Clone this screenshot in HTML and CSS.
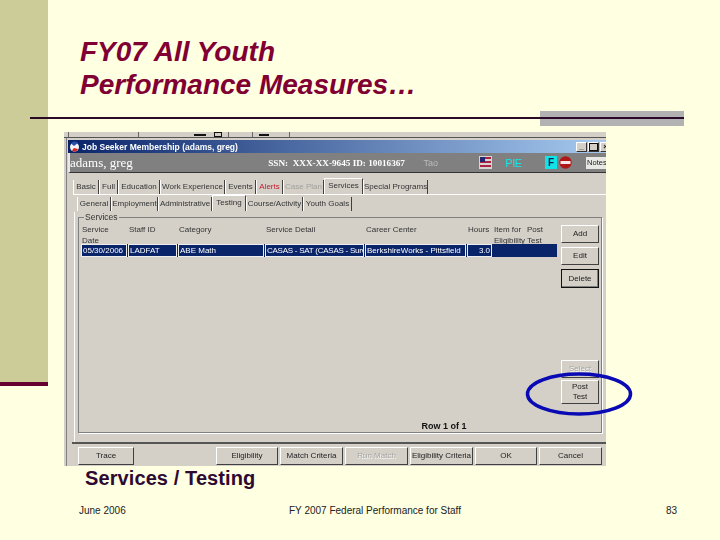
FILE: index.html
```html
<!DOCTYPE html>
<html lang="en">
<head>
<meta charset="utf-8">
<title>FY07 All Youth Performance Measures</title>
<link rel="stylesheet" href="styles.css">
</head>
<body>
<main class="slide">
  <div class="band"></div>
  <h1 class="title">FY07 All Youth<br>Performance Measures…</h1>
  <div class="rule"><div class="accent"></div><div class="line"></div></div>

  <section class="window">
    <div class="toolbar"><i class="s1"></i><i class="s2"></i><i class="s3"></i><i class="s4"></i><i class="s5"></i></div>
    <div class="titlebar">
      <svg class="appicon" width="12" height="12" viewBox="0 0 12 12"><rect width="12" height="12" fill="#0a246a"/><circle cx="6.5" cy="6" r="4.5" fill="#f4f4f4"/><path d="M3 2.5a4.5 4.5 0 0 1 7-0.5L6 5z" fill="#2a4fa8"/><path d="M4 9.5a3.5 3 0 0 0 6-1.5L6 7z" fill="#d8261c"/></svg>
      <span class="titletext">Job Seeker Membership (adams, greg)</span>
      <div class="winbtns"><b>_</b><b class="max"></b><b>×</b></div>
    </div>
    <div class="header">
      <span class="name">adams, greg</span>
      <span class="ssn">SSN: &nbsp;XXX-XX-9645 ID: 10016367</span>
      <span class="tao">Tao</span>
      <svg class="flag" width="13" height="13" viewBox="0 0 13 13"><rect width="13" height="13" fill="#d8d4d0"/><rect x="5" y="1" width="7" height="2" fill="#b02040"/><rect x="1" y="5" width="11" height="2" fill="#b02040"/><rect x="1" y="9" width="11" height="2" fill="#b02040"/><rect x="1" y="1" width="5" height="5" fill="#26266e"/></svg>
      <span class="pie">PIE</span>
      <span class="fbox">F</span>
      <svg class="stop" width="13" height="13" viewBox="0 0 13 13"><circle cx="6.5" cy="6.5" r="6.2" fill="#b01818"/><rect x="1.5" y="5" width="10" height="3" fill="#f4e8e8"/></svg>
      <span class="notes">Notes</span>
    </div>

    <div class="tabs primary">
      <span class="tab w26">Basic</span><span class="tab w19">Full</span><span class="tab w42">Education</span><span class="tab w65">Work Experience</span><span class="tab w31">Events</span><span class="tab w27 alert">Alerts</span><span class="tab w41 off">Case Plan</span><span class="tab w39 on">Services</span><span class="tab w65">Special Programs</span>
    </div>
    <div class="tabs secondary">
      <span class="tab w34">General</span><span class="tab w47">Employment</span><span class="tab w54">Administrative</span><span class="tab w34 on">Testing</span><span class="tab w57">Course/Activity</span><span class="tab w49">Youth Goals</span>
    </div>

    <div class="panel">
      <div class="group">
        <span class="legend">Services</span>
        <div class="list">
          <div class="cols heads">
            <span>Service<br>Date</span><span>Staff ID</span><span>Category</span><span>Service Detail</span><span>Career Center</span><span>Hours</span><span>Item for<br>Eligibility</span><span>Post<br>Test</span>
          </div>
          <div class="cols selected">
            <span>05/30/2006</span><span>LADFAT</span><span>ABE Math</span><span class="tight">CASAS - SAT (CASAS - Surv</span><span>BerkshireWorks - Pittsfield</span><span class="num">3.0</span><span></span><span></span>
          </div>
          <div class="count">Row 1 of 1</div>
        </div>
        <div class="actions">
          <button class="btn">Add</button>
          <button class="btn">Edit</button>
          <button class="btn focus">Delete</button>
          <button class="btn select off">Select</button>
          <button class="btn post">Post<br>Test</button>
        </div>
      </div>
    </div>

    <div class="footerbar">
      <button class="btn b56">Trace</button>
      <span class="blank"></span>
      <button class="btn b62">Eligibility</button>
      <button class="btn b63">Match Criteria</button>
      <button class="btn b63 off">Run Match</button>
      <button class="btn b63">Eligibility Criteria</button>
      <button class="btn b62">OK</button>
      <button class="btn b63">Cancel</button>
    </div>
  </section>

  <svg class="ring" width="110" height="48" viewBox="0 0 110 48"><ellipse cx="55" cy="24" rx="51.5" ry="20" fill="none" stroke="#0a0ab4" stroke-width="3.5"/></svg>

  <p class="caption">Services / Testing</p>
  <footer class="foot">
    <span class="date">June 2006</span>
    <span class="mid">FY 2007 Federal Performance for Staff</span>
    <span class="page">83</span>
  </footer>
</main>
</body>
</html>
```

FILE: styles.css
```css
* { box-sizing: border-box; }
html, body { margin: 0; padding: 0; }
body { background: #ffffe1; font-family: "Liberation Sans", Arial, sans-serif; }
.slide { position: relative; width: 720px; height: 540px; overflow: hidden; background: #ffffe1; padding-top: 35px; }

.band { position: absolute; left: 0; top: 0; width: 48px; height: 386px; background: #cccc99; border-bottom: 4px solid #660033; }

.title { position: relative; margin: 0 0 0 80px; font-size: 28px; line-height: 33px; font-style: italic; font-weight: bold; color: #800033; }

.rule { position: relative; height: 2px; margin: 16px 0 0 30px; width: 654px; }
.line { position: absolute; inset: 0; background: #2b0a28; }
.accent { position: absolute; left: 510px; top: -6px; width: 144px; height: 15px; background: #b2b2b2; }

.window { position: relative; display: flex; flex-direction: column; width: 542px; height: 334px; margin: 13px 0 0 64px; background: linear-gradient(#808080, #808080) 2px 0 / 1px 100% no-repeat, #d4d0c8; overflow: hidden; font-size: 8px; color: #222; filter: blur(0.4px); }

.toolbar { display: flex; flex: none; height: 6px; margin-bottom: 2px; background: #d4d0c8; border-bottom: 1px solid #555; }
.toolbar i { display: block; height: 5px; border-right: 1px solid #666; background-repeat: no-repeat; }
.toolbar .s1 { width: 5px; }
.toolbar .s2 { width: 70px; }
.toolbar .s3 { width: 90px; background-image: linear-gradient(#111, #111), linear-gradient(#d4d0c8, #d4d0c8), linear-gradient(#111, #111); background-size: 12px 2px, 6px 3px, 8px 5px; background-position: 55px 2px, 76px 1px, 75px 0; }
.toolbar .s4 { width: 24px; }
.toolbar .s5 { width: 37px; background-image: linear-gradient(#111, #111); background-size: 10px 2px; background-position: 6px 2px; }

.titlebar { display: flex; flex: none; align-items: center; height: 13px; margin-left: 4px; background: linear-gradient(90deg, #0a246a, #a6caf0); color: #fff; }
.appicon { flex: none; }
.titletext { margin-left: 2px; font-size: 8.5px; font-weight: bold; white-space: nowrap; }
.winbtns { display: flex; gap: 1px; margin-left: auto; margin-right: -5px; }
.winbtns b { display: block; width: 11px; height: 10px; background: #d4d0c8; border: 1px solid; border-color: #fff #333 #333 #fff; color: #111; font-size: 8px; line-height: 8px; text-align: center; }
.winbtns .max { box-shadow: inset 0 1px 0 #111, inset 1px 0 0 #111, inset -1px 0 0 #111, inset 0 -1px 0 #111; }

.header { display: flex; flex: none; align-items: center; height: 20px; margin-left: 4px; background: #808080; border-left: 2px solid #e8e8e8; border-bottom: 1px solid #333; color: #fff; white-space: nowrap; }
.name { width: 199px; font-family: "Liberation Serif", serif; font-size: 13px; }
.ssn { width: 156px; font-family: "Liberation Serif", serif; font-size: 9.2px; font-weight: bold; }
.tao { width: 56px; font-size: 9px; color: #bbb; }
.flag { flex: none; margin-right: 13px; }
.pie { width: 40px; font-size: 11px; color: #16e6e6; letter-spacing: -0.5px; }
.fbox { width: 12px; height: 13px; background: #10e4e8; color: #102050; font-size: 10px; font-weight: bold; line-height: 13px; text-align: center; }
.stop { flex: none; margin-left: 2px; margin-right: 14px; }
.notes { width: 20px; height: 12px; background: #e8e8e4; color: #222; font-size: 7.5px; line-height: 12px; padding-left: 1px; overflow: hidden; }

.tabs { display: flex; align-items: flex-end; white-space: nowrap; }
.primary { flex: none; height: 22px; margin-left: 9px; border-bottom: 1px solid #fff; }
.secondary { flex: none; height: 17px; margin-left: 13px; padding-bottom: 1px; }
.tab { display: block; height: 14px; line-height: 13px; text-align: center; border-left: 1px solid #fff; border-right: 1px solid #404040; font-size: 8px; color: #333; overflow: hidden; }
.tab.on { height: 16px; line-height: 13px; border-top: 1px solid #fff; }
.tab.alert { color: #c02030; }
.tab.off { color: #a0a09c; }
.w19 { width: 19px; } .w26 { width: 26px; } .w27 { width: 27px; } .w31 { width: 31px; } .w34 { width: 34px; }
.w39 { width: 39px; } .w41 { width: 41px; } .w42 { width: 42px; } .w47 { width: 47px; } .w49 { width: 49px; }
.w54 { width: 54px; } .w57 { width: 57px; } .w65 { width: 65px; }

.panel { flex: none; height: 230px; margin-left: 10px; padding: 5px 0 9px 3px; border-left: 1px solid #fff; }
.group { position: relative; display: flex; height: 216px; width: 524px; border: 1px solid #808080; box-shadow: 1px 1px 0 #fff; }
.legend { position: absolute; left: 5px; top: -5px; padding: 0 1px; line-height: 9px; background: #d4d0c8; color: #333; font-size: 8.5px; }

.list { position: relative; width: 478px; padding: 6px 0 0 2px; }
.cols { display: grid; grid-template-columns: 47px 50px 87px 100px 102px 26px 33px 31px; line-height: 11px; font-size: 8px; color: #333; }
.heads { height: 20px; }
.cols span { display: block; padding-left: 1px; overflow: hidden; }
.selected { height: 13px; background: #0a246a; color: #fff; white-space: nowrap; }
.selected span { border: 1px solid #eee; margin-right: 1px; }
.selected span:nth-child(n+7) { border: 0; }
.selected .num { padding-right: 1px; text-align: right; }
.selected .tight { letter-spacing: -0.25px; }
.count { position: absolute; left: 0; right: 0; top: 203px; padding-left: 252px; color: #111; font-size: 9px; font-weight: bold; line-height: 11px; text-align: center; }

.actions { display: flex; flex-direction: column; gap: 4px; padding-top: 7px; width: 38px; margin-left: 4px; }
.btn { display: block; width: 38px; height: 18px; padding: 0; background: #d4d0c8; border: 1px solid; border-color: #fff #404040 #404040 #fff; color: #222; font-family: "Liberation Sans", Arial, sans-serif; font-size: 8px; line-height: 10px; white-space: nowrap; }
.btn.focus { height: 19px; border: 1px solid #111; box-shadow: inset -1px -1px 0 #808080; }
.btn.off { color: #a4a4a0; text-shadow: 0.5px 0.5px 0 #fff; }
.select { margin-top: 68px; }
.post { height: 24px; margin-top: -2px; }

.footerbar { display: flex; flex: none; gap: 2px; align-items: flex-start; height: 24px; margin-left: 8px; padding: 3px 0 0 6px; border-top: 2px solid #555; }
.b56 { width: 56px; }
.b62 { width: 62px; }
.b63 { width: 63px; }
.blank { width: 78px; }

.ring { position: absolute; left: 524px; top: 370px; }

.caption { margin: 1px 0 0 85px; font-size: 20px; line-height: 23px; font-weight: bold; letter-spacing: 0.1px; color: #2e0a33; }

.foot { position: relative; display: flex; height: 12px; margin-top: 15px; font-size: 10px; line-height: 12px; color: #222; }
.date { width: 210px; margin-left: 79px; }
.mid { width: 377px; }
```
